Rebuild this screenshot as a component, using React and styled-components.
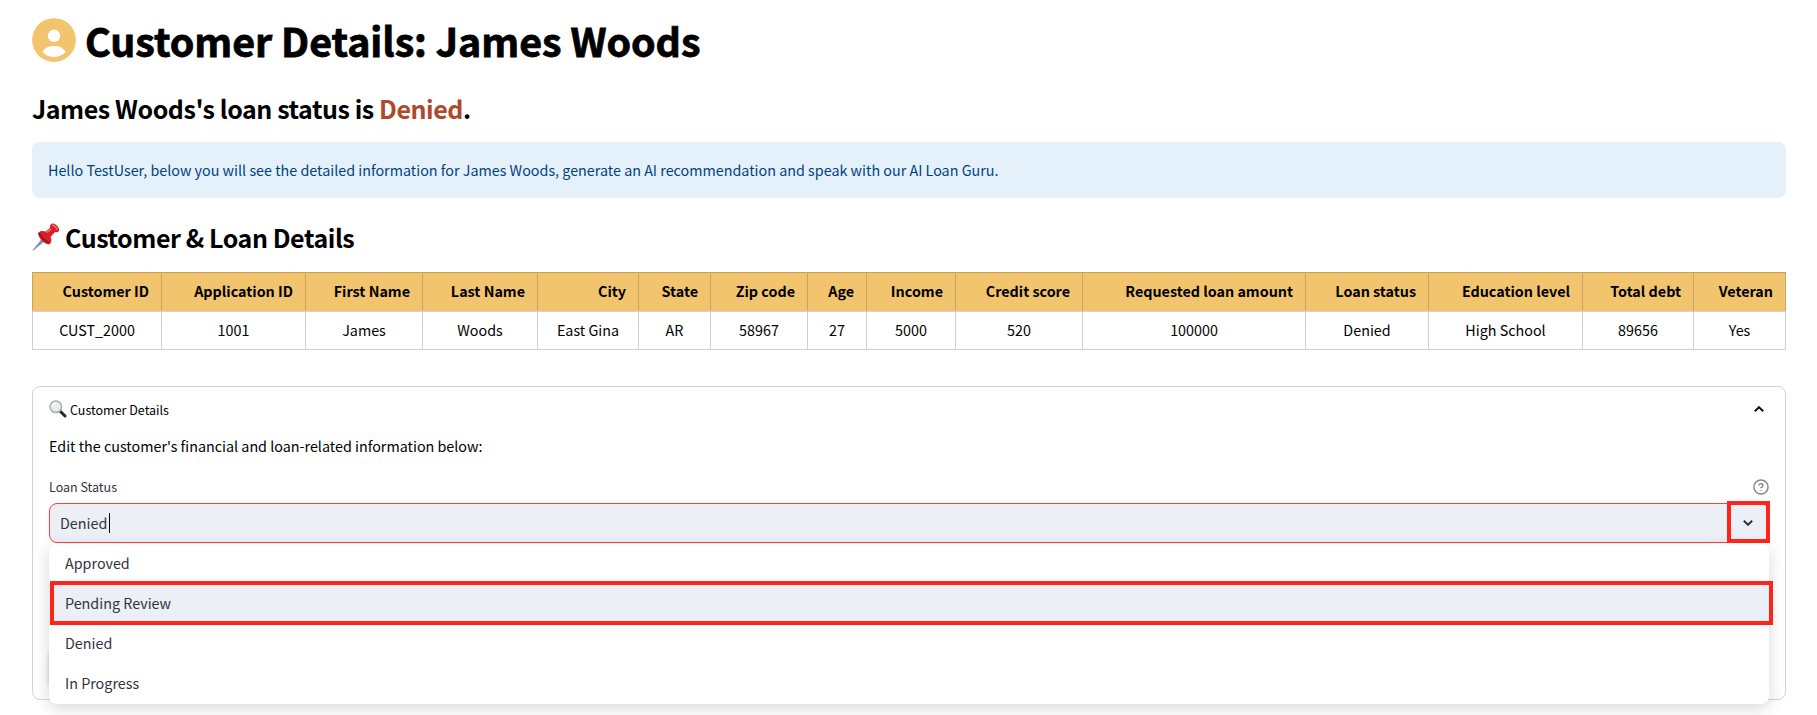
import React from "react";
import styled, { createGlobalStyle } from "styled-components";

const Global = createGlobalStyle`
  * { box-sizing: border-box; }
  html, body { margin: 0; padding: 0; background: #fff; overflow: hidden; }
  body { font-family: "Noto Sans CJK JP", "Noto Sans", sans-serif; font-size: 14.33px; color: #000; }
`;

const Page = styled.main`
  height: 715px;
  padding: 18px 31px 0 32px;
  overflow: hidden;
`;

const TitleRow = styled.header`
  display: flex;
  align-items: center;
  gap: 9px;
  height: 44px;
`;

const Title = styled.h1`
  margin: 0;
  font-size: 39.4px;
  font-weight: 700;
  line-height: 44px;
  letter-spacing: -0.05px;
  -webkit-text-stroke: 0.8px #000;
  white-space: nowrap;
`;

const Heading = styled.h3`
  display: flex;
  align-items: center;
  margin: ${(p) => p.$top}px 0 0;
  font-size: 25px;
  font-weight: 600;
  line-height: 34px;
  height: 34px;
  letter-spacing: -0.44px;
  white-space: pre;
`;

const Status = styled.span`
  color: #ae4a2b;
`;

const Alert = styled.div`
  display: flex;
  align-items: center;
  height: 56px;
  margin-top: 17px;
  padding: 0 16px 2px;
  border-radius: 8px;
  background: #e4f1fb;
  color: #004280;
`;

const Table = styled.table`
  width: 1754px;
  margin-top: 18px;
  border-collapse: collapse;
  table-layout: fixed;
`;

const HeadCell = styled.th`
  height: 39px;
  padding: 0 12px 2px 0;
  border: 1px solid #c9a661;
  border-top-color: #c3a05b;
  border-bottom-color: #d3d3d3;
  background: #f1c46d;
  font-weight: 700;
  text-align: right;
  white-space: nowrap;
  line-height: 24px;
`;

const Cell = styled.td`
  height: 38px;
  padding: 0 0 2px;
  border: 1px solid #cfcfcf;
  text-align: center;
  white-space: nowrap;
  line-height: 24px;
`;

const Panel = styled.section`
  height: 314px;
  margin-top: 36px;
  padding: 0 16px;
  border: 1px solid #d3d3d5;
  border-radius: 8px;
`;

const Summary = styled.div`
  display: flex;
  align-items: center;
  height: 44px;
  font-size: 12.5px;
  padding-right: 5px;
`;

const SummaryText = styled.span`
  flex: 1;
  margin-left: 3px;
`;

const Intro = styled.p`
  margin: 3px 0 0;
  line-height: 24px;
`;

const LabelRow = styled.div`
  display: flex;
  align-items: center;
  justify-content: space-between;
  height: 24px;
  margin-top: 17px;
  font-size: 12.5px;
  color: #31333f;
`;

const Label = styled.span`
  padding-bottom: 2px;
`;

const Select = styled.div`
  position: relative;
  display: flex;
  align-items: center;
  height: 40px;
  margin-top: 4px;
  padding: 0 0 0 10px;
  border: 1px solid #ff4040;
  border-radius: 8px;
  background: #eceff5;
  color: #31333f;
`;

const SelectValue = styled.span`
  padding-bottom: 2px;
`;

const Caret = styled.span`
  width: 1px;
  height: 20px;
  margin-left: 2px;
  background: #000;
`;

const ArrowHighlight = styled.div`
  position: absolute;
  top: -3px;
  right: -2px;
  display: flex;
  align-items: center;
  justify-content: center;
  width: 43px;
  height: 42px;
  padding: 1px 1px 0 0;
  border: 4px solid #ff2419;
`;

const CoveredButton = styled.div`
  position: absolute;
  top: 143px;
  left: 0;
  width: 120px;
  height: 40px;
  border-radius: 8px;
  box-shadow: 0 2px 5px rgba(0, 0, 0, 0.35);
`;

const Menu = styled.ul`
  position: absolute;
  top: 40px;
  left: -1px;
  width: 1720px;
  height: 160px;
  margin: 0;
  padding: 0;
  list-style: none;
  border-radius: 8px;
  background: #fff;
  box-shadow: 0 4px 16px rgba(0, 0, 0, 0.16);
`;

const Option = styled.li`
  display: flex;
  align-items: center;
  height: 40px;
  padding: 0 0 3px 16px;
  background: ${(p) => (p.$active ? "#eceff5" : "transparent")};
`;

const OptionHighlight = styled.div`
  position: absolute;
  top: 37px;
  left: 1px;
  width: 1723px;
  height: 44px;
  border: 4px solid #ff2419;
`;

const columns = [
  ["Customer ID", "CUST_2000", 129],
  ["Application ID", "1001", 144],
  ["First Name", "James", 117],
  ["Last Name", "Woods", 115],
  ["City", "East Gina", 101],
  ["State", "AR", 72],
  ["Zip code", "58967", 97],
  ["Age", "27", 59],
  ["Income", "5000", 89],
  ["Credit score", "520", 127],
  ["Requested loan amount", "100000", 223],
  ["Loan status", "Denied", 123],
  ["Education level", "High School", 154],
  ["Total debt", "89656", 111],
  ["Veteran", "Yes", 92],
];

const options = ["Approved", "Pending Review", "Denied", "In Progress"];

const PersonIcon = () => (
  <svg width="44" height="44" viewBox="0 0 44 44">
    <circle cx="22" cy="22.1" r="21.900" fill="#f1c46d" />
    <circle cx="22" cy="17.8" r="6.2" fill="#fff" />
    <path d="M10.500 34C13 29.500 17 28 22 28S31 29.500 33.500 34C30.500 37.200 26.500 39 22 39S13.500 37.200 10.500 34Z" fill="#fff" />
  </svg>
);

const PinIcon = () => (
  <svg width="33" height="34" viewBox="0 0 33 34">
    <path d="M1 30.300L10.500 18.500L13 20.500Z" fill="#8093a3" stroke="#71889b" strokeWidth=".8" />
    <path d="M6 13C8 10.500 11 10.500 13.500 11.500L18 8C17.500 5 19 3.300 21 3.500C24 4 27 7 27.300 10C27 12 25 12.500 23 12L18.500 17C20 20 19.800 23 17 24.500C12 24 6.500 18.500 6 13Z" fill="#d81f2a" />
    <path d="M7 13Q11 20 17 23" stroke="#a90f20" strokeWidth="2" fill="none" />
    <path d="M20 5Q24 6 25.500 10M14.500 12.500L19 9" stroke="#f4666a" strokeWidth="1.800" fill="none" />
  </svg>
);

const MagnifierIcon = () => (
  <svg width="18" height="18" viewBox="0 0 18 18">
    <path d="M11 11L16 16" stroke="#25292c" strokeWidth="3" strokeLinecap="round" />
    <circle cx="6.800" cy="6.800" r="5.800" fill="#e9eef0" stroke="#a4adb2" strokeWidth="1.500" />
    <path d="M3.500 6Q4.300 3.500 7 3.300" stroke="#fff" strokeWidth="1.300" fill="none" />
  </svg>
);

const Chevron = ({ up, color }) => (
  <svg width="10" height="6" viewBox="0 0 10 6">
    <path d={up ? "M.8 5.200L5 1.200L9.200 5.200" : "M.8 .8L5 4.800L9.200 .8"} fill="none" stroke={color} strokeWidth="2" />
  </svg>
);

const HelpIcon = () => (
  <svg width="16" height="16" viewBox="0 0 24 24" fill="none" stroke="#83848c" strokeWidth="2.100" strokeLinecap="round" strokeLinejoin="round">
    <circle cx="12" cy="12" r="10.600" />
    <path d="M9.090 9a3 3 0 0 1 5.830 1c0 2-3 3-3 3M12 17h.01" />
  </svg>
);

export default function App() {
  return (
    <Page>
      <Global />
      <TitleRow>
        <PersonIcon />
        <Title>Customer Details: James Woods</Title>
      </TitleRow>
      <Heading $top={29}>
        James Woods's loan status is <Status>Denied</Status>.
      </Heading>
      <Alert>
        <span>Hello TestUser, below you will see the detailed information for James Woods, generate an AI recommendation and speak with our AI Loan Guru.</span>
      </Alert>
      <Heading $top={22}>
        <PinIcon />
        Customer &amp; Loan Details
      </Heading>
      <Table>
        <colgroup>
          {columns.map(([name, , width]) => <col key={name} width={width} />)}
        </colgroup>
        <thead>
          <tr>{columns.map(([name]) => <HeadCell key={name}>{name}</HeadCell>)}</tr>
        </thead>
        <tbody>
          <tr>{columns.map(([name, value]) => <Cell key={name}>{value}</Cell>)}</tr>
        </tbody>
      </Table>
      <Panel>
        <Summary>
          <MagnifierIcon />
          <SummaryText>Customer Details</SummaryText>
          <Chevron up color="#111" />
        </Summary>
        <Intro>Edit the customer's financial and loan-related information below:</Intro>
        <LabelRow>
          <Label>Loan Status</Label>
          <HelpIcon />
        </LabelRow>
        <Select>
          <SelectValue>Denied</SelectValue>
          <Caret />
          <CoveredButton />
          <Menu>
            {options.map((o) => <Option key={o} $active={o === "Pending Review"}>{o}</Option>)}
            <OptionHighlight />
          </Menu>
          <ArrowHighlight>
            <Chevron color="#31333f" />
          </ArrowHighlight>
        </Select>
      </Panel>
    </Page>
  );
}
